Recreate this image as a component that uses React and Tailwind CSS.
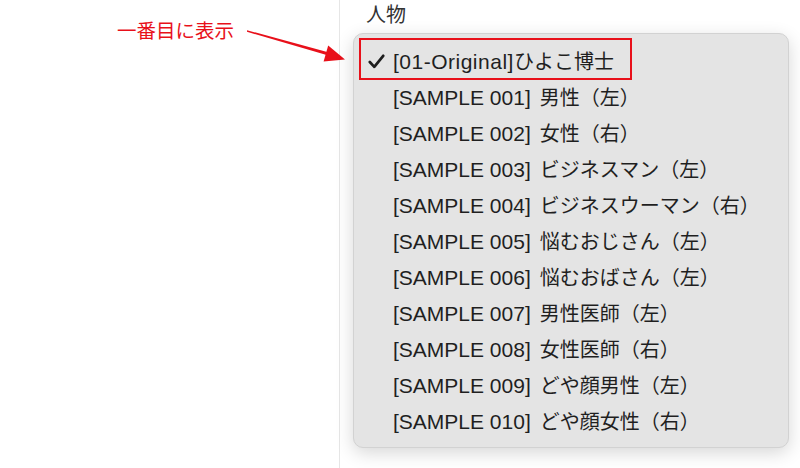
import React from "react";

const items = [
  ["[SAMPLE 001]", "男性（左）"],
  ["[SAMPLE 002]", "女性（右）"],
  ["[SAMPLE 003]", "ビジネスマン（左）"],
  ["[SAMPLE 004]", "ビジネスウーマン（右）"],
  ["[SAMPLE 005]", "悩むおじさん（左）"],
  ["[SAMPLE 006]", "悩むおばさん（左）"],
  ["[SAMPLE 007]", "男性医師（左）"],
  ["[SAMPLE 008]", "女性医師（右）"],
  ["[SAMPLE 009]", "どや顔男性（左）"],
  ["[SAMPLE 010]", "どや顔女性（右）"],
];

const font = "font-['Helvetica','Liberation_Sans','Noto_Sans_CJK_JP',sans-serif]";

export default function App() {
  return (
    <div className={`relative flex w-[800px] h-[468px] bg-white overflow-hidden ${font}`}>
      {/* Annotation */}
      <div className="w-[339px] relative">
        <div className="absolute left-[117px] top-[19px] text-[19.5px] leading-[24px] text-[#e8101a]">
          一番目に表示
        </div>
        <svg className="absolute left-[240px] top-[24px]" width="110" height="44" viewBox="240 24 110 44">
          <polygon points="247,30.2 247,31.8 326.6,54.9 327.2,52.1" fill="#e8101a" />
          <polygon points="345,59.5 323.6,61.5 328.2,45.6" fill="#e8101a" />
        </svg>
      </div>

      {/* Divider */}
      <div className="w-px h-full bg-[#e6e6e6]" />

      {/* Panel */}
      <div className="flex-1 flex flex-col pl-[13px]">
        <div className="pl-[13px] text-[20px] leading-[30px] text-[#333] h-[33px]">人物</div>
        <div className="relative w-[436px] h-[415px] rounded-[10px] bg-[#e4e4e4] border border-[#d2d2d2] shadow-[0_5px_18px_rgba(0,0,0,0.16)] pt-[9px] text-[#1f1f1f]">
          <div className="flex items-center h-[37px]">
            <span className="w-[39px] pl-[14px] flex items-center">
              <svg width="17" height="15" viewBox="0 0 17 15">
                <path d="M1.8 8 L6.3 12.8 L15.2 1.8" fill="none" stroke="#1e1e1e" strokeWidth="2.7" strokeLinecap="round" strokeLinejoin="round" />
              </svg>
            </span>
            <span className="text-[21px] tracking-[0.5px]">[01-Original]</span>
            <span className="text-[20px]">ひよこ博士</span>
          </div>
          {items.map(([a, b]) => (
            <div key={a} className="flex items-center h-[36px] pl-[39px] gap-[9px]">
              <span className="text-[21px]">{a}</span>
              <span className="text-[20px]">{b}</span>
            </div>
          ))}
          {/* Red highlight box */}
          <div className="absolute left-[5px] top-[4px] w-[273px] h-[42px] border-2 border-[#e8101a]" />
        </div>
      </div>
    </div>
  );
}
